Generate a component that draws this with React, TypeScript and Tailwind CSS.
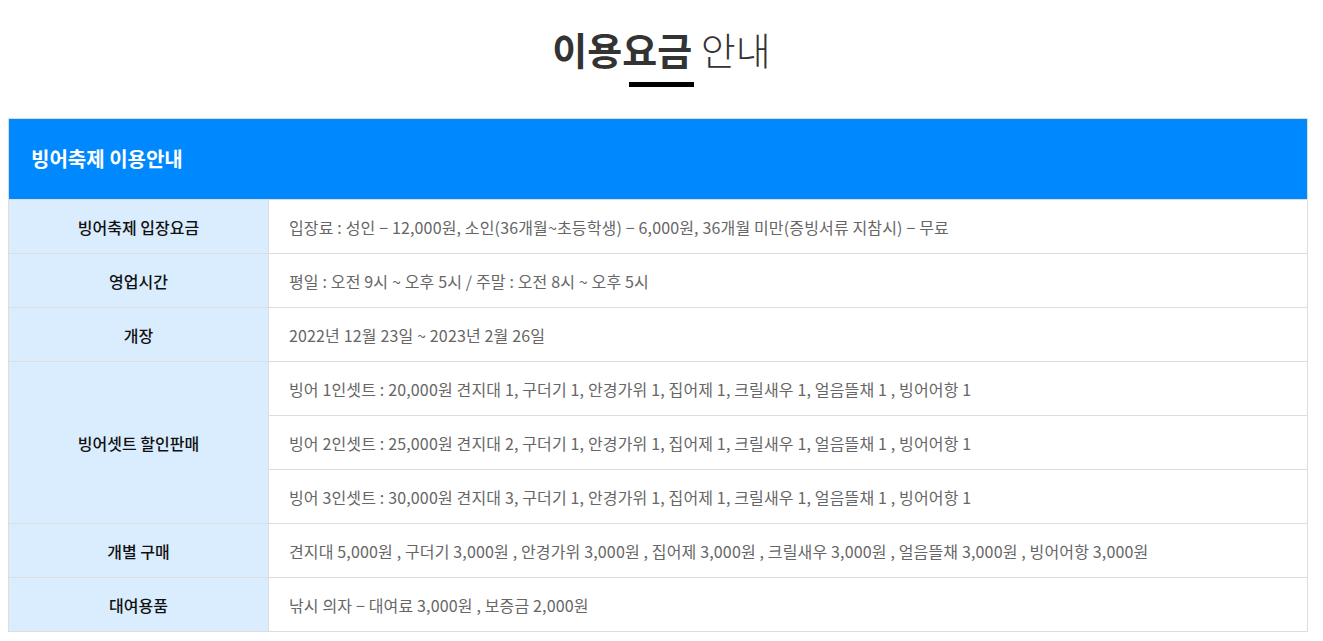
const font = { fontFamily: '"Noto Sans CJK KR", "Noto Sans", sans-serif' }

const rows: { label: string; items: string[] }[] = [
  {
    label: "빙어축제 입장요금",
    items: ["입장료 : 성인 − 12,000원, 소인(36개월~초등학생) − 6,000원, 36개월 미만(증빙서류 지참시) − 무료"],
  },
  { label: "영업시간", items: ["평일 : 오전 9시 ~ 오후 5시 / 주말 : 오전 8시 ~ 오후 5시"] },
  { label: "개장", items: ["2022년 12월 23일 ~ 2023년 2월 26일"] },
  {
    label: "빙어셋트 할인판매",
    items: [
      "빙어 1인셋트 : 20,000원 견지대 1, 구더기 1, 안경가위 1, 집어제 1, 크릴새우 1, 얼음뜰채 1 , 빙어어항 1",
      "빙어 2인셋트 : 25,000원 견지대 2, 구더기 1, 안경가위 1, 집어제 1, 크릴새우 1, 얼음뜰채 1 , 빙어어항 1",
      "빙어 3인셋트 : 30,000원 견지대 3, 구더기 1, 안경가위 1, 집어제 1, 크릴새우 1, 얼음뜰채 1 , 빙어어항 1",
    ],
  },
  {
    label: "개별 구매",
    items: [
      "견지대 5,000원 , 구더기 3,000원 , 안경가위 3,000원 , 집어제 3,000원 , 크릴새우 3,000원 , 얼음뜰채 3,000원 , 빙어어항 3,000원",
    ],
  },
  { label: "대여용품", items: ["낚시 의자 − 대여료 3,000원 , 보증금 2,000원"] },
]

export default function App() {
  return (
    <div className="min-h-screen bg-white" style={font}>
      <div className="flex flex-col items-center pt-[22px]">
        <h2 className="text-[38px] leading-[54px] text-[#333]">
          <span className="font-bold">이용요금</span> <span className="font-light">안내</span>
        </h2>
        <div className="mt-[6px] h-[5px] w-[65px] bg-black" />
      </div>
      <div className="px-2 pt-[31px]">
        <table className="w-[1300px] border-collapse border border-[#dddddd]">
          <thead>
            <tr>
              <th colSpan={2} className="h-[81px] bg-[#0089ff] pl-[22px] text-left text-[20px] font-bold text-white">
                빙어축제 이용안내
              </th>
            </tr>
          </thead>
          <tbody>
            {rows.map((r) =>
              r.items.map((it, i) => (
                <tr key={r.label + i}>
                  {i === 0 && (
                    <th
                      rowSpan={r.items.length}
                      className="w-[260px] border border-[#dddddd] bg-[#daedfe] text-center text-[16px] font-medium text-[#111]"
                    >
                      {r.label}
                    </th>
                  )}
                  <td className="h-[54px] border border-[#dddddd] pl-[20px] text-[16px] tracking-[0.15px] text-[#666]">
                    {it}
                  </td>
                </tr>
              ))
            )}
          </tbody>
        </table>
      </div>
    </div>
  )
}
